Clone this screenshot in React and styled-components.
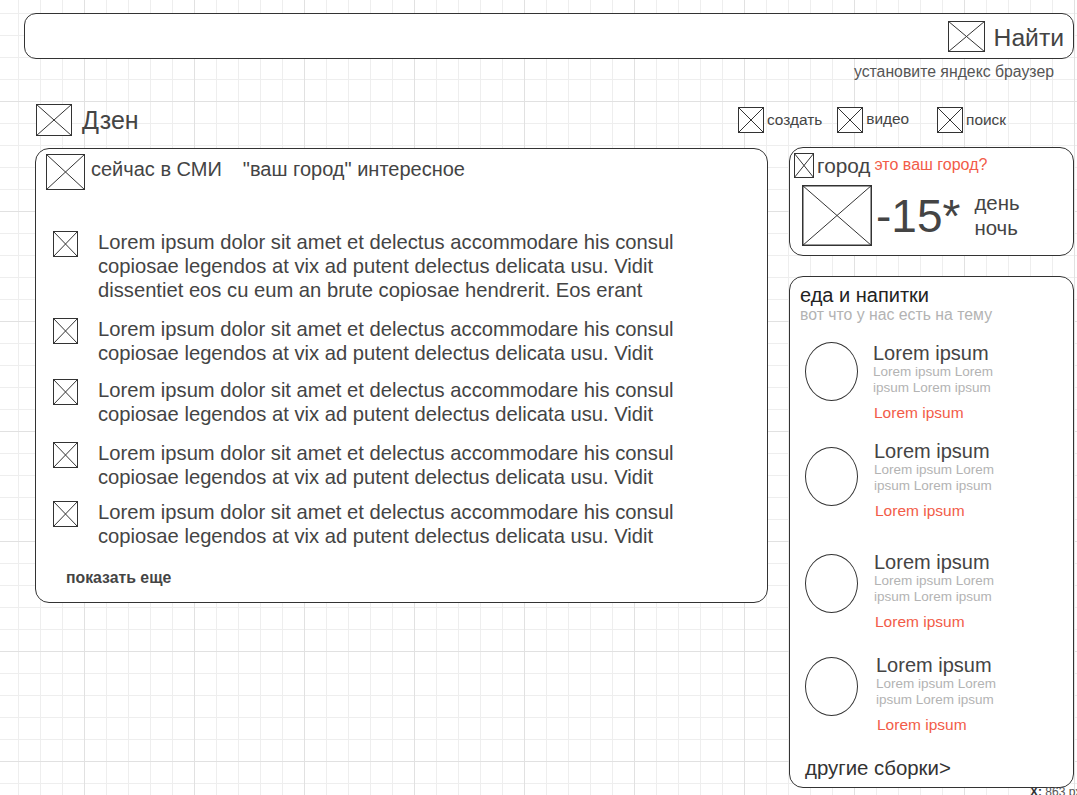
import React from "react";
import styled, { createGlobalStyle } from "styled-components";

const GlobalStyle = createGlobalStyle`
  html, body {
    margin: 0;
    padding: 0;
  }
  body {
    font-family: "Liberation Sans", Arial, sans-serif;
    color: #444;
    background-color: #fff;
    background-image:
      linear-gradient(to right, #e1e1e1 1px, transparent 1px),
      linear-gradient(to bottom, #e1e1e1 1px, transparent 1px),
      linear-gradient(to right, #eeeeee 1px, transparent 1px),
      linear-gradient(to bottom, #eeeeee 1px, transparent 1px);
    background-size: 110px 110px, 110px 110px, 22px 22px, 22px 22px;
    background-position: 84px 0, 0 101px, 18px 0, 0 13px;
    overflow: hidden;
  }
`;

const Page = styled.div`
  position: relative;
  width: 1077px;
  height: 795px;
  padding-top: 13px;
  box-sizing: border-box;
`;

const SearchBar = styled.div`
  margin-left: 24px;
  width: 1050px;
  height: 46px;
  box-sizing: border-box;
  border: 1px solid #333;
  border-radius: 12px;
  background: #fff;
  display: flex;
  align-items: center;
  justify-content: flex-end;
  gap: 9px;
  padding-right: 9px;
`;

const SearchLabel = styled.span`
  font-size: 24.7px;
  color: #444;
  margin-top: 3px;
`;

const Hint = styled.div`
  text-align: right;
  padding-right: 23px;
  margin-top: 4px;
  font-size: 15.8px;
  line-height: 18px;
  color: #555;
`;

const TopRow = styled.div`
  display: flex;
  align-items: center;
  margin-top: 23px;
  padding-left: 36px;
  height: 32px;
`;

const Brand = styled.div`
  display: flex;
  align-items: center;
  gap: 10px;
  font-size: 25px;
  color: #444;
`;

const Nav = styled.nav`
  margin-left: auto;
  display: flex;
  align-items: center;
  padding-right: 71px;
`;

const NavItem = styled.div`
  display: flex;
  align-items: center;
  gap: 3px;
  margin-left: ${(p) => p.$offset}px;
  font-size: 15.4px;
  color: #444;
  span {
    margin-top: ${(p) => (p.$raise ? -3 : 0)}px;
  }
`;

const Content = styled.div`
  display: flex;
  align-items: flex-start;
  margin-top: 12px;
  padding-left: 35px;
`;

const Card = styled.section`
  background: #fff;
  border: 1px solid #333;
  border-radius: 14px;
  box-sizing: border-box;
`;

const NewsCard = styled(Card)`
  width: 733px;
  height: 455px;
  padding: 5px 10px 0 10px;
  display: flex;
  flex-direction: column;
`;

const NewsHeader = styled.div`
  display: flex;
  align-items: flex-start;
  font-size: 20px;
  line-height: 24px;
  color: #444;
`;

const HeaderText = styled.span`
  margin-top: 3px;
  margin-left: ${(p) => p.$gap}px;
`;

const NewsList = styled.ul`
  list-style: none;
  margin: 0;
  padding: 0 0 0 7px;
  display: flex;
  flex-direction: column;
`;

const NewsItem = styled.li`
  display: flex;
  align-items: flex-start;
  gap: 20px;
  margin-top: ${(p) => p.$space}px;
  svg {
    margin-top: 1px;
    flex-shrink: 0;
  }
`;

const NewsText = styled.p`
  margin: 0;
  font-size: 20.2px;
  line-height: 24px;
  color: #444;
  white-space: pre-line;
`;

const MoreLink = styled.div`
  margin-top: 21px;
  padding-left: 20px;
  font-size: 15.8px;
  font-weight: bold;
  color: #444;
`;

const Side = styled.aside`
  margin-left: 21px;
  margin-top: -1px;
  display: flex;
  flex-direction: column;
  gap: 20px;
`;

const WeatherCard = styled(Card)`
  width: 285px;
  height: 109px;
  padding: 5px 4px 0 4px;
`;

const CityRow = styled.div`
  display: flex;
  align-items: center;
  gap: 3px;
`;

const City = styled.span`
  font-size: 20.8px;
  color: #444;
`;

const CityAsk = styled.span`
  font-size: 16px;
  color: #f25c48;
  margin-left: 1px;
  margin-top: -2px;
`;

const WeatherRow = styled.div`
  display: flex;
  align-items: center;
  margin-top: 7px;
  padding-left: 8px;
`;

const Temp = styled.span`
  font-size: 46px;
  color: #444;
  margin-left: 4px;
  margin-top: 1px;
`;

const DayNight = styled.div`
  display: flex;
  flex-direction: column;
  margin-left: 14px;
  font-size: 20.4px;
  line-height: 25px;
  color: #444;
`;

const FoodCard = styled(Card)`
  width: 285px;
  height: 512px;
  padding: 7px 10px 8px 10px;
  display: flex;
  flex-direction: column;
`;

const FoodTitle = styled.div`
  font-size: 20px;
  line-height: 22px;
  color: #222;
`;

const FoodSub = styled.div`
  font-size: 15.8px;
  line-height: 18px;
  color: #b3b3b3;
`;

const FoodList = styled.div`
  display: flex;
  flex-direction: column;
  margin-top: 18px;
  padding-left: 5px;
`;

const FoodItem = styled.div`
  display: flex;
  align-items: flex-start;
  gap: 15px;
  margin-top: ${(p) => p.$space}px;
`;

const Circle = styled.div`
  width: 53px;
  height: 59px;
  box-sizing: border-box;
  border: 1px solid #333;
  border-radius: 50%;
  margin-top: ${(p) => p.$drop}px;
  flex-shrink: 0;
`;

const FoodBody = styled.div`
  display: flex;
  flex-direction: column;
  padding-left: ${(p) => p.$shift}px;
`;

const ItemTitle = styled.div`
  font-size: 20px;
  line-height: 22px;
  color: #444;
`;

const ItemDesc = styled.div`
  width: 130px;
  font-size: 13.5px;
  line-height: 16px;
  color: #b3b3b3;
`;

const ItemLink = styled.div`
  margin-top: 8px;
  padding-left: 1px;
  font-size: 15.5px;
  line-height: 18px;
  color: #f25c48;
`;

const FoodFooter = styled.div`
  margin-top: auto;
  padding-left: 5px;
  font-size: 20.4px;
  line-height: 22px;
  color: #333;
`;

const Coords = styled.div`
  position: absolute;
  left: 1030px;
  top: 785px;
  white-space: nowrap;
  font-size: 12px;
  color: #555;
  b {
    color: #333;
  }
`;

function Placeholder({ w, h, stroke = 1 }) {
  return (
    <svg width={w} height={h} viewBox={`0 0 ${w} ${h}`}>
      <rect
        x={stroke / 2}
        y={stroke / 2}
        width={w - stroke}
        height={h - stroke}
        fill="#fff"
        stroke="#333"
        strokeWidth={stroke}
      />
      <line x1="0" y1="0" x2={w} y2={h} stroke="#333" strokeWidth="1" />
      <line x1={w} y1="0" x2="0" y2={h} stroke="#333" strokeWidth="1" />
    </svg>
  );
}

const first =
  "Lorem ipsum dolor sit amet et delectus accommodare his consul\ncopiosae legendos at vix ad putent delectus delicata usu. Vidit";

const news = [
  { text: first + "\ndissentiet eos cu eum an brute copiosae hendrerit. Eos erant", space: 40 },
  { text: first, space: 15 },
  { text: first, space: 13 },
  { text: first, space: 15 },
  { text: first, space: 11 },
];

const food = [
  { shift: 0, space: 0, drop: 0 },
  { shift: 1, space: 18, drop: 7 },
  { shift: 1, space: 31, drop: 3 },
  { shift: 3, space: 23, drop: 3 },
];

export default function App() {
  return (
    <Page>
      <GlobalStyle />
      <SearchBar>
        <Placeholder w={37} h={31} />
        <SearchLabel>Найти</SearchLabel>
      </SearchBar>
      <Hint>установите яндекс браузер</Hint>

      <TopRow>
        <Brand>
          <Placeholder w={36} h={32} />
          Дзен
        </Brand>
        <Nav>
          <NavItem $offset={0}>
            <Placeholder w={26} h={26} />
            <span>создать</span>
          </NavItem>
          <NavItem $offset={15} $raise>
            <Placeholder w={26} h={26} />
            <span>видео</span>
          </NavItem>
          <NavItem $offset={28}>
            <Placeholder w={26} h={26} />
            <span>поиск</span>
          </NavItem>
        </Nav>
      </TopRow>

      <Content>
        <NewsCard>
          <NewsHeader>
            <Placeholder w={39} h={36} />
            <HeaderText $gap={6}>сейчас в СМИ</HeaderText>
            <HeaderText $gap={21}>"ваш город" интересное</HeaderText>
          </NewsHeader>
          <NewsList>
            {news.map((n, i) => (
              <NewsItem key={i} $space={n.space}>
                <Placeholder w={25} h={26} />
                <NewsText>{n.text}</NewsText>
              </NewsItem>
            ))}
          </NewsList>
          <MoreLink>показать еще</MoreLink>
        </NewsCard>

        <Side>
          <WeatherCard>
            <CityRow>
              <Placeholder w={20} h={25} />
              <City>город</City>
              <CityAsk>это ваш город?</CityAsk>
            </CityRow>
            <WeatherRow>
              <Placeholder w={70} h={61} stroke={1.5} />
              <Temp>-15*</Temp>
              <DayNight>
                <span>день</span>
                <span>ночь</span>
              </DayNight>
            </WeatherRow>
          </WeatherCard>

          <FoodCard>
            <FoodTitle>еда и напитки</FoodTitle>
            <FoodSub>вот что у нас есть на тему</FoodSub>
            <FoodList>
              {food.map((f, i) => (
                <FoodItem key={i} $space={f.space}>
                  <Circle $drop={f.drop} />
                  <FoodBody $shift={f.shift}>
                    <ItemTitle>Lorem ipsum</ItemTitle>
                    <ItemDesc>Lorem ipsum Lorem ipsum Lorem ipsum</ItemDesc>
                    <ItemLink>Lorem ipsum</ItemLink>
                  </FoodBody>
                </FoodItem>
              ))}
            </FoodList>
            <FoodFooter>другие сборки&gt;</FoodFooter>
          </FoodCard>
        </Side>
      </Content>

      <Coords>
        <b>X:</b> 863 px
      </Coords>
    </Page>
  );
}
